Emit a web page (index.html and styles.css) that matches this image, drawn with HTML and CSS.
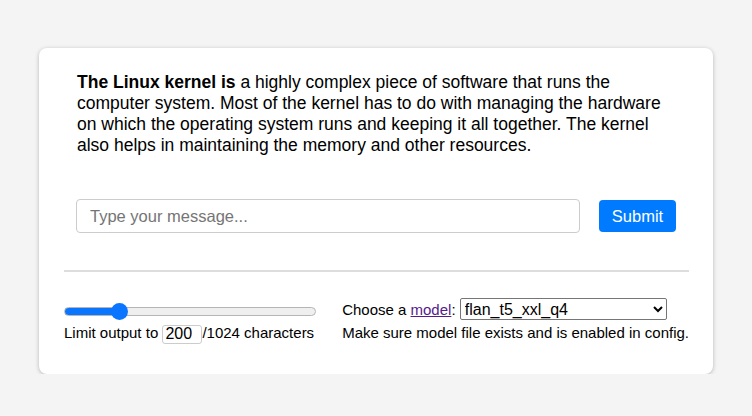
FILE: index.html
```html
<!DOCTYPE html>
<html>
<head>
<meta charset="utf-8">
<link rel="stylesheet" href="styles.css">
</head>
<body>
<div class="card">
  <div class="top">
    <p class="answer"><b>The Linux kernel is</b> a highly complex piece of software that runs the computer system. Most of the kernel has to do with managing the hardware on which the operating system runs and keeping it all together. The kernel also helps in maintaining the memory and other resources.</p>
    <form class="ask">
      <input class="msg" type="text" placeholder="Type your message...">
      <button class="submit" type="button">Submit</button>
    </form>
  </div>
  <hr class="sep">
  <div class="settings">
    <div class="col left">
      <input class="range" type="range" min="0" max="1024" value="200" style="--fill: 56px">
      <div class="line">Limit output to <input class="num" type="text" value="200">/1024 characters</div>
    </div>
    <div class="col right">
      <div class="line">Choose a <a class="link" href="#">model</a>: <select class="model"><option>flan_t5_xxl_q4</option></select></div>
      <div class="line">Make sure model file exists and is enabled in config.</div>
    </div>
  </div>
</div>
</body>
</html>
```

FILE: styles.css
```css
html, body {
  margin: 0;
  padding: 0;
  background: #f4f4f4;
  font-family: "Liberation Sans", Arial, sans-serif;
  color: #000;
}
.card {
  box-sizing: border-box;
  width: 674px;
  margin: 48px 0 0 39px;
  background: #fff;
  border-radius: 8px;
  box-shadow: 0 1px 4px rgba(0,0,0,0.25);
  padding: 24px 24px 30px 25px;
}
.top {
  padding: 0 13px 0 12px;
}
.answer {
  margin: 0 0 0 1px;
  font-size: 17.5px;
  line-height: 21px;
}
.ask {
  display: flex;
  align-items: center;
  gap: 19px;
  margin: 43px 0 0;
}
.msg {
  flex: 1;
  box-sizing: border-box;
  height: 34px;
  border: 1px solid #ccc;
  border-radius: 4px;
  padding: 0 13px;
  font-family: "Liberation Sans", Arial, sans-serif;
  font-size: 16.5px;
  outline: none;
}
.msg::placeholder {
  color: #757575;
}
.submit {
  box-sizing: border-box;
  height: 32px;
  width: 77px;
  padding: 0;
  border: none;
  border-radius: 4px;
  background: #007bff;
  color: #fff;
  font-family: "Liberation Sans", Arial, sans-serif;
  font-size: 16.5px;
}
.sep {
  border: none;
  border-top: 2px solid #ddd;
  margin: 37px 0 0;
}
.settings {
  display: flex;
  justify-content: space-between;
  margin-top: 26px;
  font-size: 15px;
}
.col {
  display: flex;
  flex-direction: column;
}
.left {
  width: 252px;
}
.range {
  -webkit-appearance: none;
  appearance: none;
  width: 252px;
  margin: 4px 0 0;
  height: 18px;
  background: transparent;
}
.range::-webkit-slider-runnable-track {
  box-sizing: border-box;
  height: 9px;
  border-radius: 5px;
  border: 1px solid #b5b5b5;
  background: linear-gradient(to right, #0a75ff 0, #0a75ff var(--fill), #efefef var(--fill));
}
.range::-webkit-slider-thumb {
  -webkit-appearance: none;
  appearance: none;
  width: 17px;
  height: 17px;
  border-radius: 50%;
  background: #0a75ff;
  border: none;
  margin-top: -5px;
}
.line {
  white-space: nowrap;
}
.left .line {
  margin-top: 4px;
}
.num {
  box-sizing: border-box;
  width: 40px;
  height: 19px;
  padding: 0 2px;
  border: 1px solid #ccc;
  border-radius: 3px;
  font-family: "Liberation Sans", Arial, sans-serif;
  font-size: 16px;
  vertical-align: -1px;
}
.link {
  color: #551a8b;
}
.model {
  width: 207px;
  height: 22px;
  font-family: "Liberation Sans", Arial, sans-serif;
  font-size: 16px;
  border: 1px solid #767676;
  border-radius: 2px;
  background: #fff;
  color: #000;
}
.right .line + .line {
  margin-top: 4px;
}
```
